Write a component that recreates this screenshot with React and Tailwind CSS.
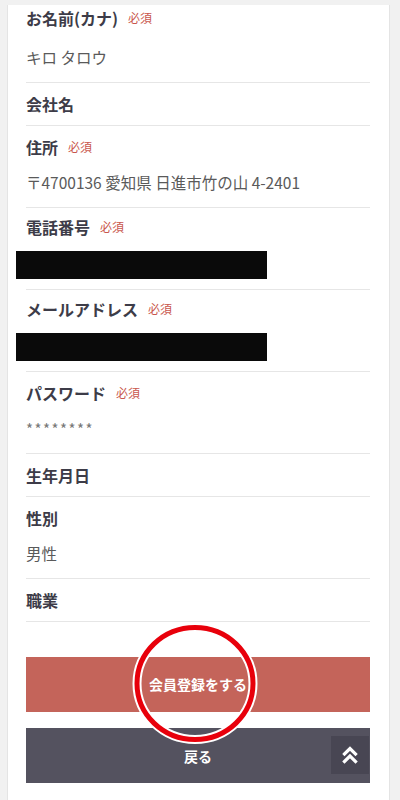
import React from "react";

const font = { fontFamily: '"Noto Sans CJK JP", "Noto Sans", sans-serif' };

function Req() {
  return <span className="ml-[10px] text-[12px] font-normal text-[#c9574d] leading-[20px]">必須</span>;
}

function Label({ children, req }) {
  return (
    <div className="flex items-center h-[20px] text-[16px] font-bold text-[#3d3c48] leading-[20px]">
      <span>{children}</span>
      {req && <Req />}
    </div>
  );
}

function Row({ label, req, value, redact, first }) {
  let pad = "pt-[11px] pb-[11px]";
  if (value) pad = "pt-[11px] pb-[13px]";
  if (redact) pad = "pt-[9px] pb-[10px]";
  if (first) pad = "pt-[3px] pb-[13px]";
  return (
    <div className={`border-b border-[#e6e6e6] ${pad}`}>
      <Label req={req}>{label}</Label>
      {value && (
        <div className={`${first ? "mt-[17px]" : "mt-[13px]"} h-[24px] leading-[24px] text-[15.5px] text-[#5a5a5a]`}>{value}</div>
      )}
      {redact && <div className="mt-[14px] -ml-[10px] h-[28px] w-[251px] bg-[#0a0a0a]" />}
    </div>
  );
}

export default function App() {
  return (
    <div className="w-[400px] h-[800px] bg-[#f1f1f1] pt-[5px] pl-[7px] pr-[10px] overflow-hidden" style={font}>
      <div className="relative h-[795px] bg-white border-l border-r border-[#e4e4e4] pl-[18px] pr-[19px]">
        <Row first label="お名前(カナ)" req value="キロ タロウ" />
        <Row label="会社名" />
        <Row label="住所" req value="〒4700136 愛知県 日進市竹の山 4-2401" />
        <Row label="電話番号" req redact />
        <Row label="メールアドレス" req redact />
        <Row label="パスワード" req value={<span className="tracking-[1.5px] text-[15px] text-[#777]">********</span>} />
        <Row label="生年月日" />
        <Row label="性別" value="男性" />
        <Row label="職業" />

        <div className="mt-[35px] flex flex-col gap-[16px]">
          <button className="h-[55px] w-full bg-[#c4645a] text-white text-[14px] font-bold">会員登録をする</button>
          <button className="relative h-[55px] w-full bg-[#54525f] text-white text-[14px] font-bold">
            <span className="relative top-[1px]">戻る</span>
            <span className="absolute right-[1px] top-[8px] w-[38px] h-[38px] bg-[#484653] flex items-center justify-center">
              <svg width="16" height="20" viewBox="0 0 16 20" fill="none" stroke="white" strokeWidth="3.2" strokeLinecap="square" strokeLinejoin="miter">
                <path d="M2.5 9 L8 3.5 L13.5 9" />
                <path d="M2.5 16.5 L8 11 L13.5 16.5" />
              </svg>
            </span>
          </button>
        </div>

        <svg className="absolute left-[122px] top-[615px] pointer-events-none" width="130" height="128" viewBox="0 0 130 128">
          <ellipse cx="65" cy="63.5" rx="58" ry="56" fill="none" stroke="white" strokeWidth="9" />
          <ellipse cx="65" cy="63.5" rx="58" ry="56" fill="none" stroke="#e8000b" strokeWidth="5" />
        </svg>
      </div>
    </div>
  );
}
